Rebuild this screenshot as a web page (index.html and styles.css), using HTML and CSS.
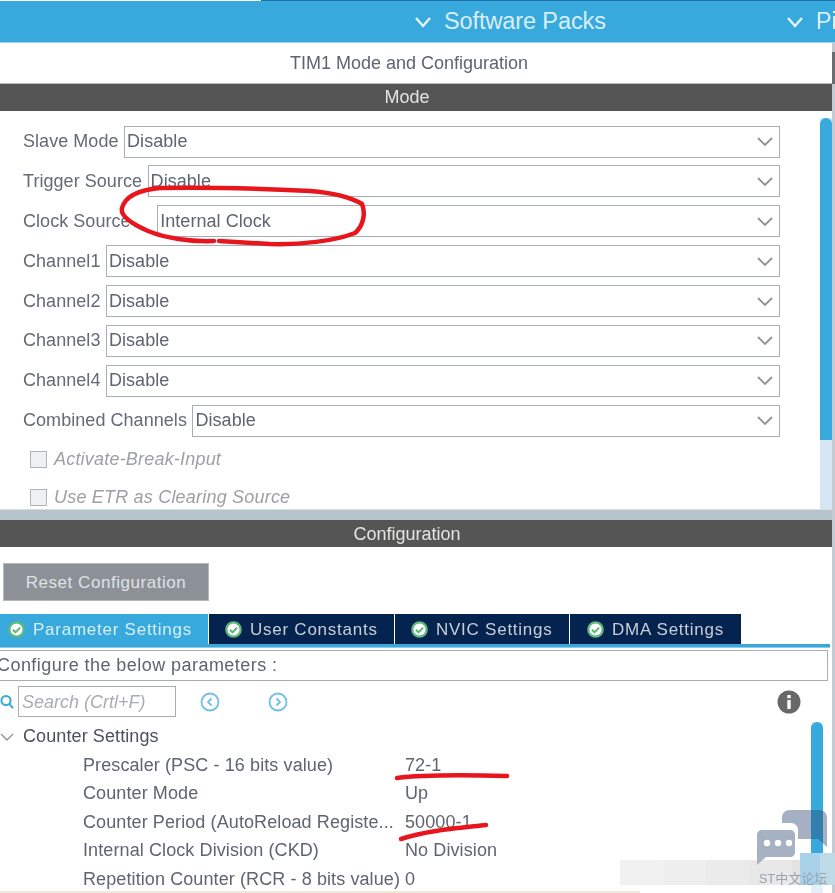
FILE: index.html
```html
<!DOCTYPE html>
<html lang="en">
<head>
<meta charset="utf-8">
<title>TIM1 Mode and Configuration</title>
<link rel="stylesheet" href="styles.css">
</head>
<body>
<div class="page">
  <div class="strip"></div>
  <header class="topbar">
    <div class="menu menu-packs"><svg class="menu-chev" viewBox="0 0 18 12"><path d="M2 2l7 8 7-8"/></svg><span>Software Packs</span></div>
    <div class="menu menu-pi"><svg class="menu-chev" viewBox="0 0 18 12"><path d="M2 2l7 8 7-8"/></svg><span>Pi</span></div>
  </header>
  <div class="title">TIM1 Mode and Configuration</div>
  <div class="bar bar-mode">Mode</div>
  <section class="mode">
    <div class="mode-rows">
      <div class="row"><label>Slave Mode</label><div class="select"><span>Disable</span><svg class="chev" viewBox="0 0 16 9"><path d="M1 1l7 7 7-7"/></svg></div></div>
      <div class="row"><label>Trigger Source</label><div class="select"><span>Disable</span><svg class="chev" viewBox="0 0 16 9"><path d="M1 1l7 7 7-7"/></svg></div></div>
      <div class="row"><label class="wide">Clock Source</label><div class="select"><span>Internal Clock</span><svg class="chev" viewBox="0 0 16 9"><path d="M1 1l7 7 7-7"/></svg></div></div>
      <div class="row"><label>Channel1</label><div class="select"><span>Disable</span><svg class="chev" viewBox="0 0 16 9"><path d="M1 1l7 7 7-7"/></svg></div></div>
      <div class="row"><label>Channel2</label><div class="select"><span>Disable</span><svg class="chev" viewBox="0 0 16 9"><path d="M1 1l7 7 7-7"/></svg></div></div>
      <div class="row"><label>Channel3</label><div class="select"><span>Disable</span><svg class="chev" viewBox="0 0 16 9"><path d="M1 1l7 7 7-7"/></svg></div></div>
      <div class="row"><label>Channel4</label><div class="select"><span>Disable</span><svg class="chev" viewBox="0 0 16 9"><path d="M1 1l7 7 7-7"/></svg></div></div>
      <div class="row"><label>Combined Channels</label><div class="select"><span>Disable</span><svg class="chev" viewBox="0 0 16 9"><path d="M1 1l7 7 7-7"/></svg></div></div>
      <div class="check check-first"><i class="box"></i><em>Activate-Break-Input</em></div>
      <div class="check"><i class="box"></i><em>Use ETR as Clearing Source</em></div>
    </div>
    <div class="track"><div class="thumb"></div></div>
  </section>
  <div class="splitter"></div>
  <div class="bar bar-config">Configuration</div>
  <section class="config">
    <button class="reset" type="button">Reset Configuration</button>
    <nav class="tabs">
      <div class="tab tab-active tab-1"><svg class="ok" viewBox="0 0 18 18"><circle cx="9" cy="9" r="7.6"/><path d="M5.2 9.2l2.8 2.8 4.8-5"/></svg>Parameter Settings</div>
      <div class="tab tab-2"><svg class="ok" viewBox="0 0 18 18"><circle cx="9" cy="9" r="7.6"/><path d="M5.2 9.2l2.8 2.8 4.8-5"/></svg>User Constants</div>
      <div class="tab tab-3"><svg class="ok" viewBox="0 0 18 18"><circle cx="9" cy="9" r="7.6"/><path d="M5.2 9.2l2.8 2.8 4.8-5"/></svg>NVIC Settings</div>
      <div class="tab tab-4"><svg class="ok" viewBox="0 0 18 18"><circle cx="9" cy="9" r="7.6"/><path d="M5.2 9.2l2.8 2.8 4.8-5"/></svg>DMA Settings</div>
    </nav>
    <div class="tabline"></div>
    <div class="hint">Configure the below parameters :</div>
    <div class="searchrow">
      <svg class="lens" viewBox="0 0 14 16"><circle cx="6" cy="6.5" r="4.6"/><path d="M9.5 10.2l3.5 4"/></svg>
      <div class="search">Search (Crtl+F)</div>
      <svg class="nav nav-prev" viewBox="0 0 20 20"><circle cx="10" cy="10" r="8.5"/><path d="M11.5 6.5L8 10l3.5 3.5"/></svg>
      <svg class="nav nav-next" viewBox="0 0 20 20"><circle cx="10" cy="10" r="8.5"/><path d="M8.5 6.5L12 10l-3.5 3.5"/></svg>
      <svg class="info" viewBox="0 0 24 24"><circle cx="12" cy="12" r="11.5"/><rect x="10.3" y="10" width="3.4" height="9" rx=".5"/><rect x="10.3" y="5" width="3.4" height="3.2" rx=".5"/></svg>
    </div>
    <div class="tree">
      <div class="group"><svg class="tree-chev" viewBox="0 0 14 8"><path d="M1 1l6 6 6-6"/></svg>Counter Settings</div>
      <div class="param"><span>Prescaler (PSC - 16 bits value)</span><span>72-1</span></div>
      <div class="param"><span>Counter Mode</span><span>Up</span></div>
      <div class="param"><span>Counter Period (AutoReload Registe...</span><span>50000-1</span></div>
      <div class="param"><span>Internal Clock Division (CKD)</span><span>No Division</span></div>
      <div class="param"><span>Repetition Counter (RCR - 8 bits value)</span><span>0</span></div>
      <div class="track2"><div class="thumb2"></div></div>
    </div>
  </section>
  <div class="rail"><div class="rail-handle"></div></div>
  <div class="edge"></div>
  <div class="mosaic"><i></i><i></i><i></i><i></i><i></i></div>
  <div class="tint"><i></i><i></i></div>
  <svg class="marks" viewBox="0 0 835 893">
    <path d="M214 241C190 242 165 238 148 231C132 224 120 216 122 208C125 197 138 190 160 188C210 187 270 189 310 191C335 193 352 198 362 204C366 214 363 226 355 233C335 241 300 245 270 244L219 241"/>
    <path d="M397 778C420 775 470 775 507 776"/>
    <path d="M401 839C425 831 450 829 486 825"/>
  </svg>
  <div class="watermark">
    <svg class="bubbles" viewBox="0 0 72 56">
      <path class="bubble-back" d="M25 13V8C25 3 28 0 33 0H62C67 0 70 3 70 8V37L61 29H41V20C41 16 38 13 34 13Z"/>
      <path class="bubble-front" d="M5 20H33C36 20 38 22 38 25V42C38 45 36 47 33 47H9L0 55V25C0 22 2 20 5 20Z"/>
      <circle cx="10" cy="33" r="3.2"/><circle cx="21" cy="33" r="3.2"/><circle cx="32" cy="33" r="3.2"/>
    </svg>
    <span>ST中文论坛</span>
  </div>
</div>
</body>
</html>
```

FILE: styles.css
```css
* { box-sizing: border-box; }
html, body { margin: 0; padding: 0; background: #fff; }
body { font-family: "Liberation Sans", Arial, sans-serif; color: #5f6470; }
.page { position: relative; width: 835px; height: 893px; overflow: hidden; filter: blur(0.35px); font-size: 18px; letter-spacing: 0.1px; }

.strip { height: 1px; margin-left: 261px; background: #1f73ad; }
.topbar { height: 42px; background: #38a9dc; border-bottom: 1px solid #9bd2ec; display: flex; color: #d9eef8; font-size: 23.5px; letter-spacing: -0.1px; }
.menu { display: flex; flex: none; align-items: center; gap: 12px; height: 41px; white-space: nowrap; }
.menu-packs { margin-left: 414px; }
.menu-pi { margin-left: 180px; }
.menu-chev { width: 18px; height: 12px; fill: none; stroke: #e6f4fb; stroke-width: 2.4; }

.title { height: 41px; line-height: 41px; width: 832px; padding-right: 14px; text-align: center; border-bottom: 1px solid #b8bcbf; letter-spacing: 0; }
.bar { height: 27px; line-height: 27px; width: 832px; padding-right: 18px; text-align: center; background: #545554; color: #e4e4e2; letter-spacing: 0; }
.bar-config { padding-top: 1px; }
.mode { height: 398px; width: 832px; display: flex; align-items: stretch; }
.mode-rows { flex: 0 0 780px; padding: 15px 0 0 23px; display: flex; flex-direction: column; gap: 8.9px; }
.row { display: flex; align-items: center; height: 31px; gap: 5.5px; flex: none; white-space: nowrap; letter-spacing: 0.05px; }
.row label { color: #666a75; }
.row label.wide { margin-right: 21px; }
.select { flex: 1; height: 32px; border: 1px solid #a7adb3; display: flex; align-items: center; justify-content: space-between; padding: 0 6px 0 2px; background: #fff; }
.chev { width: 16px; height: 9px; fill: none; stroke: #8e9297; stroke-width: 1.8; }
.check { display: flex; align-items: center; gap: 7px; height: 20px; margin-left: 7px; flex: none; color: #9d9fa4; letter-spacing: 0.2px; }
.check-first { margin-top: 4px; }
.check + .check { margin-top: 9px; }
.check em { font-style: italic; }
.box { width: 17px; height: 17px; border: 1px solid #b0b4b8; background: #eef0f1; }
.track { margin-left: 40px; width: 12px; background: #d6e6f5; margin-top: 7px; }
.thumb { height: 322px; background: #38a9dc; border-radius: 6px 6px 0 0; }

.splitter { height: 11px; width: 832px; background: #b8c4cc; border-top: 1px solid #d8dee2; }
.config { position: relative; width: 835px; }
.reset { display: block; margin: 16px 0 0 3px; width: 206px; height: 38px; background: #8c9198; border: 1px solid #b5b8bc; color: #dfe2e4; font: inherit; font-size: 17px; letter-spacing: 0.55px; padding: 2px 0 0; }
.tabs { display: flex; height: 30px; margin-top: 13px; gap: 1px; }
.tab { display: flex; align-items: center; gap: 8px; height: 30px; padding-top: 1px; background: #04234e; color: #c9ced7; font-size: 17px; letter-spacing: 0.75px; white-space: nowrap; }
.tab-active { background: #38a9dc; color: #d8eef8; }
.tab-1 { width: 208px; padding-left: 8px; }
.tab-2 { width: 185px; padding-left: 16px; }
.tab-3 { width: 174px; padding-left: 16px; }
.tab-4 { width: 171px; padding-left: 17px; }
.ok { width: 17px; height: 17px; flex: none; }
.ok circle { fill: #fff; stroke: #5fb97a; stroke-width: 2.4; }
.ok path { fill: none; stroke: #5fb97a; stroke-width: 2.2; }
.tabline { height: 4px; width: 830px; background: #38a9dc; border-bottom: 1px solid #8fc9e6; }
.hint { height: 31px; line-height: 28px; width: 836px; margin: 2px 0 0 -8px; border: 1px solid #a7adb3; padding-left: 4px; letter-spacing: 0.45px; white-space: nowrap; }
.searchrow { position: relative; display: flex; align-items: center; height: 31px; margin-top: 5px; }
.lens { width: 14px; height: 16px; fill: none; stroke: #38a9dc; stroke-width: 2; flex: none; margin-right: 4px; }
.search { width: 158px; height: 31px; line-height: 30px; border: 1px solid #a7adb3; padding-left: 3px; color: #a9acb1; font-style: italic; white-space: nowrap; letter-spacing: 0; }
.nav { width: 20px; height: 20px; fill: none; stroke: #6fc0e6; stroke-width: 1.8; flex: none; }
.nav-prev { margin-left: 24px; }
.nav-next { margin-left: 48px; }
.info { width: 24px; height: 24px; margin-left: 489px; flex: none; fill: #fff; }
.info circle { fill: #686868; }

.tree { position: relative; padding-top: 5.5px; }
.group { display: flex; align-items: center; height: 28px; gap: 10px; color: #4d515c; }
.tree-chev { width: 14px; height: 8px; fill: none; stroke: #8e9297; stroke-width: 1.4; margin-right: -1px; flex: none; }
.param { display: grid; grid-template-columns: 322px auto; height: 28.5px; line-height: 28.5px; padding-left: 83px; white-space: nowrap; }
.track2 { position: absolute; left: 811px; top: 5px; width: 12px; height: 182px; background: #e4eff8; }
.thumb2 { height: 150px; background: #38a9dc; border-radius: 6px 6px 0 0; }

.rail { position: absolute; left: 832px; top: 43px; width: 3px; height: 850px; background: #c4cbd0; }
.rail-handle { height: 32px; margin-top: 9px; background: #6a6d6f; }
.edge { position: absolute; left: 0; bottom: 0; width: 640px; height: 2px; background: #f1e9da; }
.marks { position: absolute; inset: 0; width: 835px; height: 893px; fill: none; stroke: #e8151d; stroke-width: 4.5; stroke-linecap: round; }
.mosaic { position: absolute; left: 620px; top: 860px; width: 215px; height: 25px; display: flex; }
.mosaic i { flex: 1; background: #f1f1f1; }
.mosaic i:nth-child(2) { background: #eeeeee; }
.mosaic i:nth-child(3) { background: #ebebeb; }
.mosaic i:nth-child(4) { background: #e8e8e8; }
.mosaic i:nth-child(5) { background: #e3e3e3; }
.tint { position: absolute; left: 800px; top: 853px; width: 35px; height: 32px; display: flex; }
.tint i { flex: 0 0 20px; background: #a8d2ea; }
.tint i + i { flex: 0 0 15px; background: #c0dbe8; }
.watermark { position: absolute; left: 757px; top: 810px; width: 72px; text-align: center; }
.bubbles { display: block; width: 72px; height: 56px; }
.bubble-back { fill: rgba(40, 70, 110, 0.42); }
.bubble-front { fill: #a6b2c1; }
.bubbles circle { fill: #fff; }
.watermark span { display: block; margin-top: 2px; font-size: 13px; letter-spacing: 0; color: #97a3b0; white-space: nowrap; font-family: "Liberation Sans", "Noto Sans CJK SC", sans-serif; }
```
